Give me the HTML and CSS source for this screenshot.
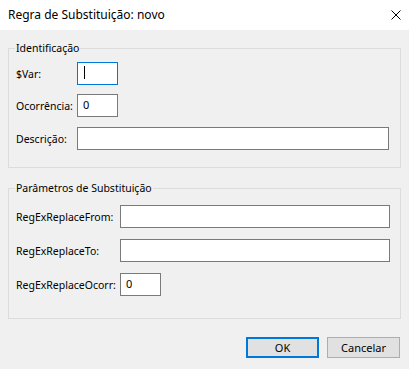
FILE: index.html
```html
<!DOCTYPE html>
<html lang="pt">
<head>
    <meta charset="UTF-8">
    <title>Regra de Substituição: novo</title>
    <link rel="stylesheet" href="styles.css">
</head>
<body>
<div class="titlebar">
    <span class="title">Regra de Substituição: novo</span>
    <svg class="close" width="10" height="10" viewBox="0 0 10 10">
        <path d="M0.5 0.5 L9.5 9.5 M9.5 0.5 L0.5 9.5" stroke="#000" stroke-width="1" fill="none"/>
    </svg>
</div>

<div class="content">
    <!-- Identificação -->
    <fieldset class="group" id="ident-group">
        <legend>Identificação</legend>
        <div class="row">
            <label class="lbl">$Var:</label>
            <div class="field small focused"><span class="caret"></span></div>
        </div>
        <div class="row">
            <label class="lbl">Ocorrência:</label>
            <div class="field small">0</div>
        </div>
        <div class="row last">
            <label class="lbl">Descrição:</label>
            <div class="field wide"></div>
        </div>
    </fieldset>

    <!-- Parâmetros de Substituição -->
    <fieldset class="group" id="params-group">
        <legend>Parâmetros de Substituição</legend>
        <div class="row">
            <label class="lbl">RegExReplaceFrom:</label>
            <div class="field wide"></div>
        </div>
        <div class="row">
            <label class="lbl">RegExReplaceTo:</label>
            <div class="field wide"></div>
        </div>
        <div class="row">
            <label class="lbl">RegExReplaceOcorr:</label>
            <div class="field small">0</div>
        </div>
    </fieldset>

    <div class="buttons">
        <button class="btn default">OK</button>
        <button class="btn">Cancelar</button>
    </div>
</div>
</body>
</html>
```

FILE: styles.css
```css
body {
    margin: 0;
    width: 409px;
    height: 369px;
    background-color: #f0f0f0;
    font-family: "Noto Sans", "Open Sans", sans-serif;
    font-size: 10.5px;
    color: #000;
    overflow: hidden;
}

.titlebar {
    height: 30px;
    background: #fff;
    display: flex;
    align-items: center;
    justify-content: space-between;
    padding: 0 8px;
}

.title {
    font-size: 12px;
    line-height: 16px;
}

.content {
    padding: 10px 8px 0 8px;
}

.group {
    margin: 0;
    border: 1px solid #dcdcdc;
    padding: 5px 11px 17px 6px;
    display: flex;
    flex-direction: column;
    gap: 9px;
}

.group legend {
    padding: 0 1px;
    margin-left: 0;
    line-height: 17px;
}

#ident-group .lbl {
    width: 62px;
}

#params-group {
    margin-top: 12px;
    padding: 8px 10px 22px 6px;
    gap: 11px;
}

#params-group .lbl {
    width: 105px;
}

.row {
    display: flex;
    align-items: center;
    height: 23px;
}

.row.last {
    margin-top: 1px;
}

.lbl {
    padding-left: 1px;
    box-sizing: border-box;
    flex: none;
    white-space: nowrap;
}

.field {
    box-sizing: border-box;
    height: 23px;
    background: #fff;
    border: 1px solid #7a7a7a;
    padding: 2px 4px 0 5px;
    line-height: 16px;
    font-size: 11px;
    position: relative;
}

.field.small {
    width: 41px;
}

.field.wide {
    flex: 1;
}

.field.focused {
    border-color: #0078d7;
}

.caret {
    position: absolute;
    left: 6px;
    top: 3px;
    width: 1px;
    height: 13px;
    background: #000;
}

.buttons {
    display: flex;
    justify-content: flex-end;
    gap: 8px;
    margin-top: 18px;
    padding-right: 1px;
}

.btn {
    box-sizing: border-box;
    width: 73px;
    height: 21px;
    background: #e1e1e1;
    border: 1px solid #adadad;
    font-family: inherit;
    font-size: 11px;
    color: #000;
    padding: 0;
    margin: 0;
}

.btn.default {
    border: 2px solid #0078d7;
}
```
